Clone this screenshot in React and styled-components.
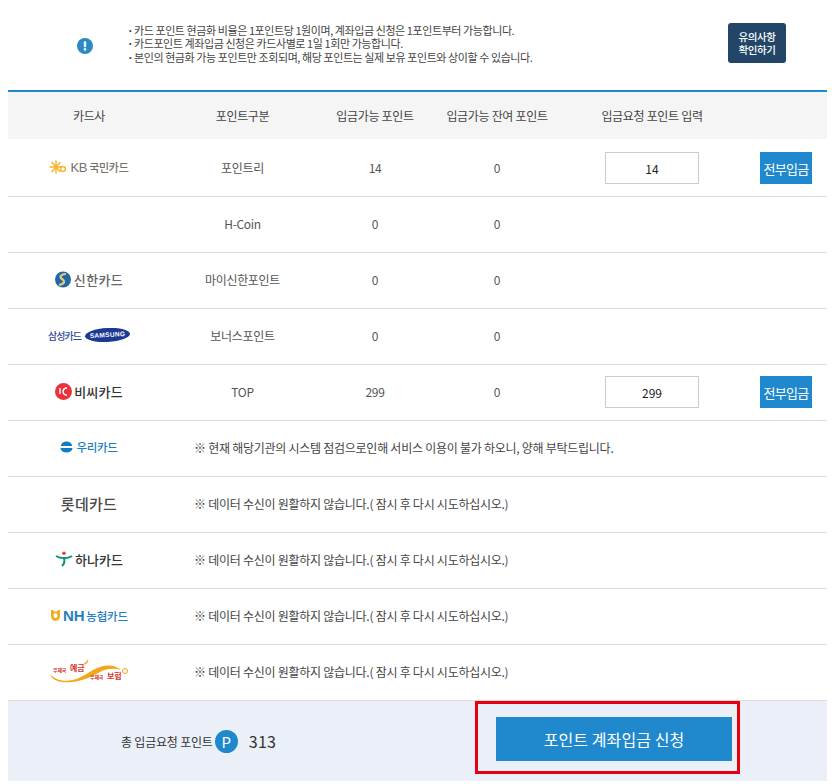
import styled, { createGlobalStyle } from "styled-components";

const GlobalStyle = createGlobalStyle`
  html, body {
    margin: 0;
    padding: 0;
    background: #fff;
  }
  body {
    font-family: "Noto Sans CJK KR", "Noto Sans", sans-serif;
    font-size: 12px;
    color: #444;
  }
`;

const COLUMNS = "162px 145px 120px 124px 186px 82px";

const Page = styled.div`
  width: 819px;
  margin-left: 8px;
  height: 784px;
`;

const Notice = styled.div`
  height: 90px;
  box-sizing: border-box;
  padding-bottom: 4px;
  display: flex;
  align-items: center;
`;

const NoticeIcon = styled.div`
  width: 119px;
  display: flex;
  justify-content: center;
  padding-left: 35px;
  padding-top: 6px;
  box-sizing: border-box;
`;

const NoticeList = styled.ul`
  list-style: none;
  margin: 0;
  padding: 2px 0 0;
  flex: 1;
  font-size: 11px;
  line-height: 13.5px;
  letter-spacing: -0.42px;
  color: #444;
  li {
    padding-left: 7px;
    position: relative;
  }
  li::before {
    content: "·";
    position: absolute;
    left: 0;
    font-weight: 700;
  }
`;

const NoticeButton = styled.button`
  width: 58px;
  height: 40px;
  margin-right: 41px;
  padding: 0;
  border: 0;
  border-radius: 3px;
  background: #234668;
  color: #fff;
  font-family: inherit;
  font-size: 10.5px;
  font-weight: 500;
  line-height: 13px;
  letter-spacing: -0.4px;
`;

const Head = styled.div`
  display: grid;
  grid-template-columns: ${COLUMNS};
  height: 47px;
  align-items: center;
  text-align: center;
  background: #f5f5f5;
  border-top: 2px solid #2088cc;
  letter-spacing: -0.32px;
  color: #444;
  margin-bottom: 2px;
`;

const Row = styled.div`
  display: grid;
  grid-template-columns: ${COLUMNS};
  height: 52px;
  padding-bottom: 3px;
  align-items: center;
  text-align: center;
  border-bottom: 1px solid #ddd;
  letter-spacing: -0.32px;
  color: #555;
`;

const Message = styled.div`
  grid-column: 2 / -1;
  text-align: left;
  padding-left: 24px;
  color: #444;
  letter-spacing: -0.26px;
`;

const AmountInput = styled.input`
  width: 94px;
  height: 32px;
  margin-top: 2px;
  box-sizing: border-box;
  border: 1px solid #ccc;
  background: #fff;
  text-align: center;
  font-family: inherit;
  font-size: 12px;
  color: #222;
  justify-self: center;
  outline: none;
`;

const FillButton = styled.button`
  width: 52px;
  height: 32px;
  margin: 2px 15px 0 0;
  padding: 0;
  border: 0;
  background: #2088cc;
  color: #fff;
  font-family: inherit;
  font-size: 13px;
  letter-spacing: -0.75px;
  justify-self: end;
`;

const Logo = styled.div`
  display: flex;
  align-items: center;
  justify-content: center;
  gap: ${(p) => p.$gap || 3}px;
  font-weight: ${(p) => p.$weight || 700};
  font-size: ${(p) => p.$size || 13}px;
  letter-spacing: ${(p) => p.$spacing || 0}px;
  color: ${(p) => p.$color || "#444"};
  white-space: nowrap;
`;

const LogoLatin = styled.span`
  font-family: "Liberation Sans", sans-serif;
  font-size: ${(p) => p.$size || 14}px;
  font-weight: ${(p) => p.$weight || 400};
  margin-right: 2px;
`;

const SamsungBadge = styled.span`
  width: 45px;
  height: 14px;
  border-radius: 50%;
  background: #1c3a94;
  color: #fff;
  font-family: "Liberation Sans", sans-serif;
  font-size: 6.5px;
  font-weight: 700;
  letter-spacing: 0.3px;
  line-height: 14px;
  transform: rotate(-3deg);
`;

const PostLogo = styled.div`
  position: relative;
  justify-self: center;
  width: 80px;
  height: 30px;
  svg {
    position: absolute;
    left: 0;
    top: 0;
  }
`;

const PostText = styled.span`
  position: absolute;
  left: ${(p) => p.$x}px;
  top: ${(p) => p.$y}px;
  font-size: ${(p) => p.$size}px;
  font-weight: 700;
  line-height: 1;
  white-space: nowrap;
  letter-spacing: -0.2px;
  color: #d5342c;
`;

const Footer = styled.div`
  height: 80px;
  background: #ebf0f8;
  display: flex;
  align-items: center;
`;

const Total = styled.div`
  width: 467px;
  display: flex;
  align-items: center;
  box-sizing: border-box;
  padding-left: 113px;
  letter-spacing: -0.2px;
  color: #333;
`;

const PointBadge = styled.span`
  width: 23px;
  height: 23px;
  margin-left: 2px;
  border-radius: 50%;
  background: #2088cc;
  color: #fff;
  font-size: 15px;
  line-height: 23px;
  text-align: center;
`;

const TotalValue = styled.span`
  margin-left: 11px;
  font-size: 16px;
  letter-spacing: 0.3px;
  color: #333;
`;

const Highlight = styled.div`
  align-self: flex-start;
  width: 265px;
  height: 73px;
  box-sizing: border-box;
  border: 3px solid #e60012;
  padding: 13px 5px 0 18px;
`;

const SubmitButton = styled.button`
  width: 236px;
  height: 44px;
  padding: 0;
  border: 0;
  background: #2088cc;
  color: #fff;
  font-family: inherit;
  font-size: 16px;
  letter-spacing: 0.1px;
`;

const KbMark = () => (
  <svg width="18" height="14" viewBox="0 0 18 14">
    <g stroke="#f7b52c" strokeWidth="1.5" strokeLinecap="round" fill="none">
      <path d="M7 1v12M1 7h12M3 2.5l8 9M11 2.5l-8 9" />
      <circle cx="14" cy="9" r="2.4" />
    </g>
  </svg>
);

const ShinhanMark = () => (
  <svg width="16" height="17" viewBox="0 0 16 17">
    <circle cx="8" cy="8.5" r="8" fill="#1f6aa5" />
    <path d="M11 3C6 3 4 6 7 8s3 5-3 6" stroke="#e8c77a" strokeWidth="2.2" fill="none" />
  </svg>
);

const BcMark = () => (
  <svg width="17" height="17" viewBox="0 0 17 17">
    <circle cx="8.5" cy="8.5" r="8.5" fill="#e8333c" />
    <path d="M12 5a4 4 0 0 0-4 3.5 3.5 3.5 0 0 0 4 3.5M5 5v6" stroke="#fff" strokeWidth="1.4" fill="none" />
  </svg>
);

const WooriMark = () => (
  <svg width="13" height="12" viewBox="0 0 14 12">
    <path d="M1 5a6 5 0 0 1 12 0z" fill="#0f7cc4" />
    <path d="M0.5 7h13a6.5 5 0 0 1-13 0z" fill="#0f7cc4" />
  </svg>
);

const HanaMark = () => (
  <svg width="18" height="16" viewBox="0 0 18 16">
    <circle cx="9" cy="2.2" r="1.8" fill="#e5443a" />
    <path d="M1 5c3 2 5 2 8 2s5 0 8-2" stroke="#0d8f7c" strokeWidth="2" fill="none" />
    <path d="M9 7c1 3 0 6-2 8" stroke="#0d8f7c" strokeWidth="2" fill="none" />
  </svg>
);

const NhMark = () => (
  <svg width="11" height="12" viewBox="0 0 11 12">
    <path d="M1 1h2l1 1.5h3L8 1h2v6a4.5 5 0 0 1-9 0z" fill="#f2ab1d" />
    <ellipse cx="5.5" cy="6.5" rx="2" ry="2.6" fill="#fff" />
  </svg>
);

const rows = [
  { logo: "kb", type: "포인트리", avail: "14", left: "0", input: "14" },
  { logo: null, type: "H-Coin", avail: "0", left: "0" },
  { logo: "shinhan", type: "마이신한포인트", avail: "0", left: "0" },
  { logo: "samsung", type: "보너스포인트", avail: "0", left: "0" },
  { logo: "bc", type: "TOP", avail: "299", left: "0", input: "299" },
  { logo: "woori", message: "※ 현재 해당기관의 시스템 점검으로인해 서비스 이용이 불가 하오니, 양해 부탁드립니다." },
  { logo: "lotte", message: "※ 데이터 수신이 원활하지 않습니다.( 잠시 후 다시 시도하십시오.)" },
  { logo: "hana", message: "※ 데이터 수신이 원활하지 않습니다.( 잠시 후 다시 시도하십시오.)" },
  { logo: "nh", message: "※ 데이터 수신이 원활하지 않습니다.( 잠시 후 다시 시도하십시오.)" },
  { logo: "post", message: "※ 데이터 수신이 원활하지 않습니다.( 잠시 후 다시 시도하십시오.)" },
];

const CardLogo = ({ name }) => {
  switch (name) {
    case "kb":
      return (
        <Logo $size={11} $color="#77716a" $gap={3} $spacing={-0.3} $weight={500}>
          <KbMark />
          <span>
            <LogoLatin $size={13}>KB</LogoLatin>국민카드
          </span>
        </Logo>
      );
    case "shinhan":
      return (
        <Logo $size={13} $color="#666" $gap={3} $spacing={0.4} $weight={500}>
          <ShinhanMark />
          <span>신한카드</span>
        </Logo>
      );
    case "samsung":
      return (
        <Logo $size={10} $color="#2c4a9a" $gap={4} $spacing={-0.9} $weight={500}>
          <span>삼성카드</span>
          <SamsungBadge>SAMSUNG</SamsungBadge>
        </Logo>
      );
    case "bc":
      return (
        <Logo $size={13} $color="#333" $gap={2} $spacing={0.2} $weight={500}>
          <BcMark />
          <span>비씨카드</span>
        </Logo>
      );
    case "woori":
      return (
        <Logo $size={11.5} $color="#1f7fc0" $gap={3} $spacing={-0.3} $weight={500}>
          <WooriMark />
          <span>우리카드</span>
        </Logo>
      );
    case "lotte":
      return (
        <Logo $size={15} $color="#4a4a4a" $spacing={0.3} $weight={500}>
          <span>롯데카드</span>
        </Logo>
      );
    case "hana":
      return (
        <Logo $size={13} $color="#333" $gap={2} $weight={500}>
          <HanaMark />
          <span>하나카드</span>
        </Logo>
      );
    case "nh":
      return (
        <Logo $size={11.5} $color="#1f7fc0" $gap={2} $spacing={-0.2} $weight={500}>
          <NhMark />
          <span>
            <LogoLatin $size={15} $weight={700}>NH</LogoLatin>농협카드
          </span>
        </Logo>
      );
    case "post":
      return (
        <PostLogo>
          <svg width="80" height="30" viewBox="0 0 80 30">
            <path d="M1 18c5 6 13 8 23 6s17-10 27-13 16-1 21 3c-7-2-14-2-21 2s-17 9-28 10S3 25 1 18z" fill="#f3a71b" />
            <path d="M33 8c2 0 5-2 6-5 1 3-2 7-6 5z" fill="#f3a71b" />
            <circle cx="76" cy="15" r="2.5" fill="none" stroke="#f3a71b" strokeWidth="1" />
          </svg>
          <PostText $x={4} $y={11} $size={5}>우체국</PostText>
          <PostText $x={21} $y={8} $size={8}>예금</PostText>
          <PostText $x={41} $y={18} $size={5}>우체국</PostText>
          <PostText $x={58} $y={16} $size={8}>보험</PostText>
        </PostLogo>
      );
    default:
      return <div />;
  }
};

const App = () => (
  <Page>
    <GlobalStyle />
    <Notice>
      <NoticeIcon>
        <svg width="16" height="16" viewBox="0 0 16 16">
          <circle cx="8" cy="8" r="8" fill="#2b8ac6" />
          <rect x="6.8" y="3.2" width="2.4" height="6" rx="1" fill="#fff" />
          <circle cx="8" cy="11.4" r="1.3" fill="#fff" />
        </svg>
      </NoticeIcon>
      <NoticeList>
        <li>카드 포인트 현금화 비율은 1포인트당 1원이며, 계좌입금 신청은 1포인트부터 가능합니다.</li>
        <li>카드포인트 계좌입금 신청은 카드사별로 1일 1회만 가능합니다.</li>
        <li>본인의 현금화 가능 포인트만 조회되며, 해당 포인트는 실제 보유 포인트와 상이할 수 있습니다.</li>
      </NoticeList>
      <NoticeButton>
        유의사항
        <br />
        확인하기
      </NoticeButton>
    </Notice>
    <Head>
      <div>카드사</div>
      <div>포인트구분</div>
      <div>입금가능 포인트</div>
      <div>입금가능 잔여 포인트</div>
      <div>입금요청 포인트 입력</div>
      <div />
    </Head>
    {rows.map((row, i) => (
      <Row key={i}>
        <CardLogo name={row.logo} />
        {row.message ? (
          <Message>{row.message}</Message>
        ) : (
          <>
            <div>{row.type}</div>
            <div>{row.avail}</div>
            <div>{row.left}</div>
            {row.input ? <AmountInput defaultValue={row.input} /> : <div />}
            {row.input ? <FillButton>전부입금</FillButton> : <div />}
          </>
        )}
      </Row>
    ))}
    <Footer>
      <Total>
        총 입금요청 포인트
        <PointBadge>P</PointBadge>
        <TotalValue>313</TotalValue>
      </Total>
      <Highlight>
        <SubmitButton>포인트 계좌입금 신청</SubmitButton>
      </Highlight>
    </Footer>
  </Page>
);

export default App;
